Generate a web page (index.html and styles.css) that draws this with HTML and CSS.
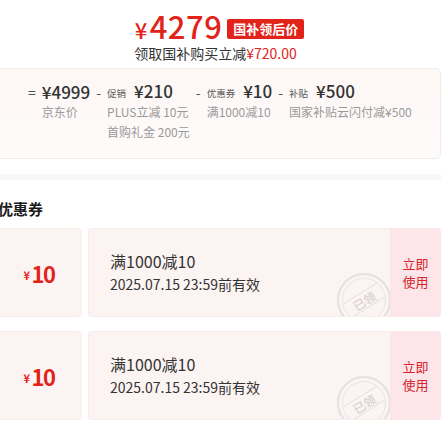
FILE: index.html
```html
<!DOCTYPE html>
<html lang="zh-CN">
<head>
    <meta charset="UTF-8">
    <meta name="viewport" content="width=device-width, initial-scale=1.0">
    <title>国补领后价</title>
    <link rel="stylesheet" href="styles.css">
</head>
<body>
    <div class="page">
        <div class="price-head">
            <div class="price-row">
                <span class="price"><span class="yen">¥</span>4279</span>
                <span class="badge">国补领后价</span>
            </div>
            <div class="price-tip">领取国补购买立减<span class="red">¥720.00</span></div>
        </div>

        <div class="breakdown">
            <div class="calc">
                <span class="op">=</span>
                <span class="amt">¥4999</span>
                <span class="op">-</span>
                <span class="amt"><span class="lbl">促销</span>¥210</span>
                <span class="op">-</span>
                <span class="amt"><span class="lbl">优惠券</span>¥10</span>
                <span class="op">-</span>
                <span class="amt"><span class="lbl">补贴</span>¥500</span>

                <span></span>
                <span class="sub">京东价</span>
                <span></span>
                <span class="sub">PLUS立减 10元</span>
                <span></span>
                <span class="sub">满1000减10</span>
                <span></span>
                <span class="sub">国家补贴云闪付减¥500</span>

                <span></span>
                <span></span>
                <span></span>
                <span class="sub">首购礼金 200元</span>
            </div>
        </div>

        <div class="band"></div>

        <div class="coupons">
            <h2 class="title">优惠券</h2>

            <div class="coupon">
                <div class="stub"><span class="c-yen">¥</span>10</div>
                <div class="body">
                    <div class="info">
                        <div class="rule">满1000减10</div>
                        <div class="expire">2025.07.15 23:59前有效</div>
                    </div>
                    <div class="stamp"><span>已领</span></div>
                </div>
                <div class="action">立即<br>使用</div>
            </div>

            <div class="coupon">
                <div class="stub"><span class="c-yen">¥</span>10</div>
                <div class="body">
                    <div class="info">
                        <div class="rule">满1000减10</div>
                        <div class="expire">2025.07.15 23:59前有效</div>
                    </div>
                    <div class="stamp"><span>已领</span></div>
                </div>
                <div class="action">立即<br>使用</div>
            </div>
        </div>
    </div>
</body>
</html>
```

FILE: styles.css
```css
body {
    margin: 0;
    background: #fff;
    font-family: "Noto Sans CJK SC", "Noto Sans", sans-serif;
    color: #333;
    overflow: hidden;
}
.page {
    margin-left: -10px;
    width: 451px;
}
.price-head {
    padding-top: 9px;
    padding-left: 8px;
    text-align: center;
}
.price-row {
    display: flex;
    justify-content: center;
    align-items: center;
    gap: 5px;
    height: 36px;
}
.price {
    color: #e2231a;
    font-size: 31px;
    font-weight: 500;
    line-height: 36px;
    letter-spacing: 0.5px;
}
.yen {
    font-size: 22px;
    margin-right: 2px;
}
.badge {
    background: #e2231a;
    color: #fff;
    font-size: 13px;
    font-weight: bold;
    line-height: 20px;
    padding: 0 6px;
    border-radius: 2px;
    margin-top: 3px;
}
.price-tip {
    font-size: 14px;
    line-height: 18px;
    margin-top: -1px;
    padding-right: 8px;
    color: #333;
}
.red {
    color: #e2231a;
}
.breakdown {
    margin-top: 6px;
    height: 91px;
    padding: 13px 0 0 37px;
    box-sizing: border-box;
    background: linear-gradient(#fdf7f5, #fefbfb);
    border: 1px solid #f1ecec;
    border-radius: 0 6px 6px 0;
}
.calc {
    display: grid;
    grid-template-columns: repeat(8, auto);
    grid-auto-rows: 20px;
    justify-content: start;
    column-gap: 6px;
    align-items: center;
}
.op {
    font-size: 14px;
    color: #555;
    line-height: 20px;
}
.amt {
    font-size: 17px;
    font-weight: 500;
    line-height: 20px;
    color: #333;
    white-space: nowrap;
}
.lbl {
    font-size: 9.5px;
    font-weight: normal;
    color: #555;
    margin-right: 8px;
    vertical-align: 1px;
}
.sub {
    font-size: 12px;
    color: #999;
    line-height: 20px;
    white-space: nowrap;
}
.band {
    height: 6px;
    margin-top: 15px;
    background: #f7f7f9;
}
.coupons {
    padding: 18px 0 10px;
}
.title {
    margin: 0 0 8px 8px;
    font-size: 15px;
    font-weight: bold;
    color: #1a1a1a;
    line-height: 22px;
}
.coupon {
    display: flex;
    height: 89px;
    margin-bottom: 14px;
}
.stub {
    width: 92px;
    background: #fcf3f3;
    border: 1px solid #f6eeee;
    border-radius: 4px;
    box-sizing: border-box;
    display: flex;
    align-items: center;
    justify-content: center;
    padding-left: 6px;
    color: #e2231a;
    font-size: 22px;
    font-weight: bold;
    letter-spacing: -1.5px;
}
.c-yen {
    font-size: 11px;
    margin-right: 3px;
    margin-top: 4px;
}
.body {
    position: relative;
    overflow: hidden;
    flex: 1;
    margin-left: 6px;
    background: #fcf3f3;
    border: 1px solid #f6eeee;
    border-right: none;
    border-radius: 4px 0 0 4px;
    display: flex;
    align-items: center;
    padding-left: 21px;
}
.rule {
    font-size: 16px;
    line-height: 23px;
    color: #333;
}
.expire {
    font-size: 14px;
    line-height: 22px;
    color: #333;
}
.stamp {
    position: absolute;
    left: 248px;
    top: 44px;
    width: 50px;
    height: 50px;
    border: 2px solid #e4e0e0;
    border-radius: 50%;
    display: flex;
    align-items: center;
    justify-content: center;
}
.stamp::before {
    content: "";
    position: absolute;
    inset: 3px;
    border: 1px solid #e8e4e4;
    border-radius: 50%;
}
.stamp span {
    transform: rotate(-32deg);
    font-size: 12px;
    color: #cfcaca;
    border-top: 1px solid #e4e0e0;
    border-bottom: 1px solid #e4e0e0;
    padding: 0 8px;
    line-height: 15px;
    background: #fcf3f3;
    position: relative;
}
.action {
    width: 51px;
    background: #fde6e9;
    border-radius: 0 4px 4px 0;
    display: flex;
    align-items: center;
    justify-content: center;
    color: #d9232c;
    font-size: 13px;
    line-height: 18px;
    text-align: center;
}
```
